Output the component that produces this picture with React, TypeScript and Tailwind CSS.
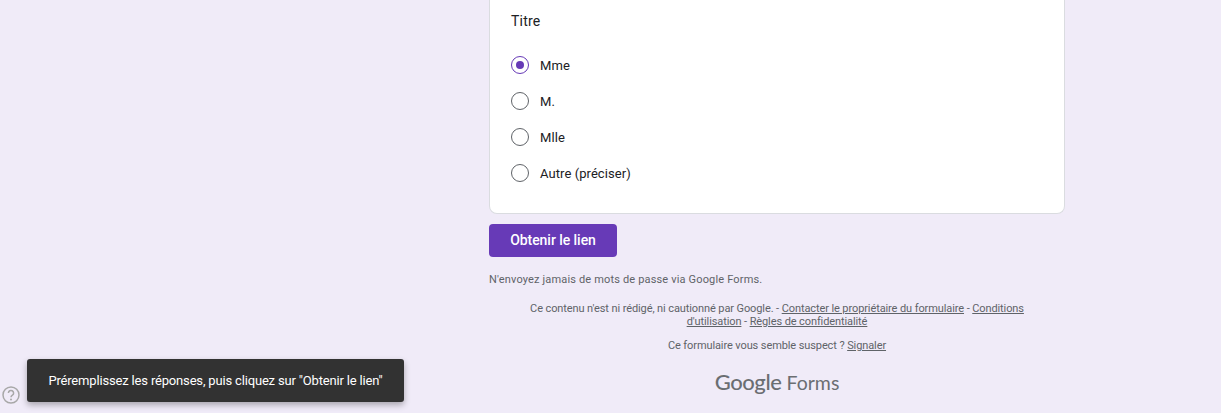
const options = ["Mme", "M.", "Mlle", "Autre (préciser)"]

const Radio = ({ checked }: { checked: boolean }) => (
  <span
    className={`flex h-[18px] w-[18px] items-center justify-center rounded-full border-[1.5px] ${checked ? "border-[#673ab7]" : "border-[#5f6368]"}`}
  >
    {checked && <span className="h-2 w-2 rounded-full bg-[#673ab7]" />}
  </span>
)

const App = () => {
  return (
    <div className="relative h-[413px] w-[1221px] overflow-hidden bg-[#f0ebf8] font-['Roboto',sans-serif]">
      {/* form column */}
      <div className="ml-[489px] flex w-[576px] flex-col">
        <section className="h-[214px] rounded-b-lg border border-t-0 border-[#dadce0] bg-white pl-[21px] pt-[13px]">
          <p className="text-[14px] leading-[16px] tracking-[0.2px] text-[#202124]">Titre</p>
          <div className="mt-[18px] flex flex-col">
            {options.map((option, i) => (
              <div key={option} className="flex h-9 items-center gap-[11px]">
                <Radio checked={i === 0} />
                <span className="pt-[2px] text-[13px] tracking-[0.07px] text-[#202124]">{option}</span>
              </div>
            ))}
          </div>
        </section>

        <button className="mt-[10px] h-[33px] w-[128px] rounded bg-[#673ab7] text-[14px] font-medium tracking-[-0.05px] text-white">
          Obtenir le lien
        </button>

        <p className="mt-[16px] text-[11px] leading-[14px] tracking-[0.16px] text-[#5f6368]">
          N'envoyez jamais de mots de passe via Google Forms.
        </p>

        <div className="mx-auto mt-[15px] w-[500px] text-center text-[11px] leading-[13px] tracking-[-0.1px] text-[#5f6368]">
          <p>
            Ce contenu n'est ni rédigé, ni cautionné par Google. - <a className="underline">Contacter le propriétaire du formulaire</a> - <a className="underline">Conditions d'utilisation</a> - <a className="underline">Règles de confidentialité</a>
          </p>
          <p className="mt-[11px]">
            Ce formulaire vous semble suspect ? <a className="underline">Signaler</a>
          </p>
        </div>

        <div className="mt-[18px] flex items-baseline justify-center gap-[5px] font-['Lato',sans-serif] text-[#6b6e72]">
          <span className="text-[22px] font-medium leading-[24px] tracking-[-0.4px]">Google</span>
          <span className="text-[19.5px] leading-[24px]">Forms</span>
        </div>
      </div>

      {/* help icon */}
      <svg className="absolute left-[2px] top-[386px] h-[18px] w-[18px]" viewBox="0 0 18 18" fill="none">
        <circle cx="9" cy="9" r="8" stroke="#a8a8a8" strokeWidth="1.5" />
        <path d="M6.4 7a2.6 2.6 0 1 1 4 2.2c-.9.6-1.4 1-1.4 2.1" stroke="#a8a8a8" strokeWidth="1.5" />
        <circle cx="9" cy="13.4" r="1" fill="#a8a8a8" />
      </svg>

      {/* toast */}
      <div className="absolute left-[27px] top-[359px] flex h-[43px] w-[377px] items-center justify-center rounded-[3px] bg-[#323232] text-[13px] tracking-[-0.17px] text-white shadow-[0_3px_6px_rgba(0,0,0,0.3)]">
        Préremplissez les réponses, puis cliquez sur "Obtenir le lien"
      </div>
    </div>
  )
}

export default App
